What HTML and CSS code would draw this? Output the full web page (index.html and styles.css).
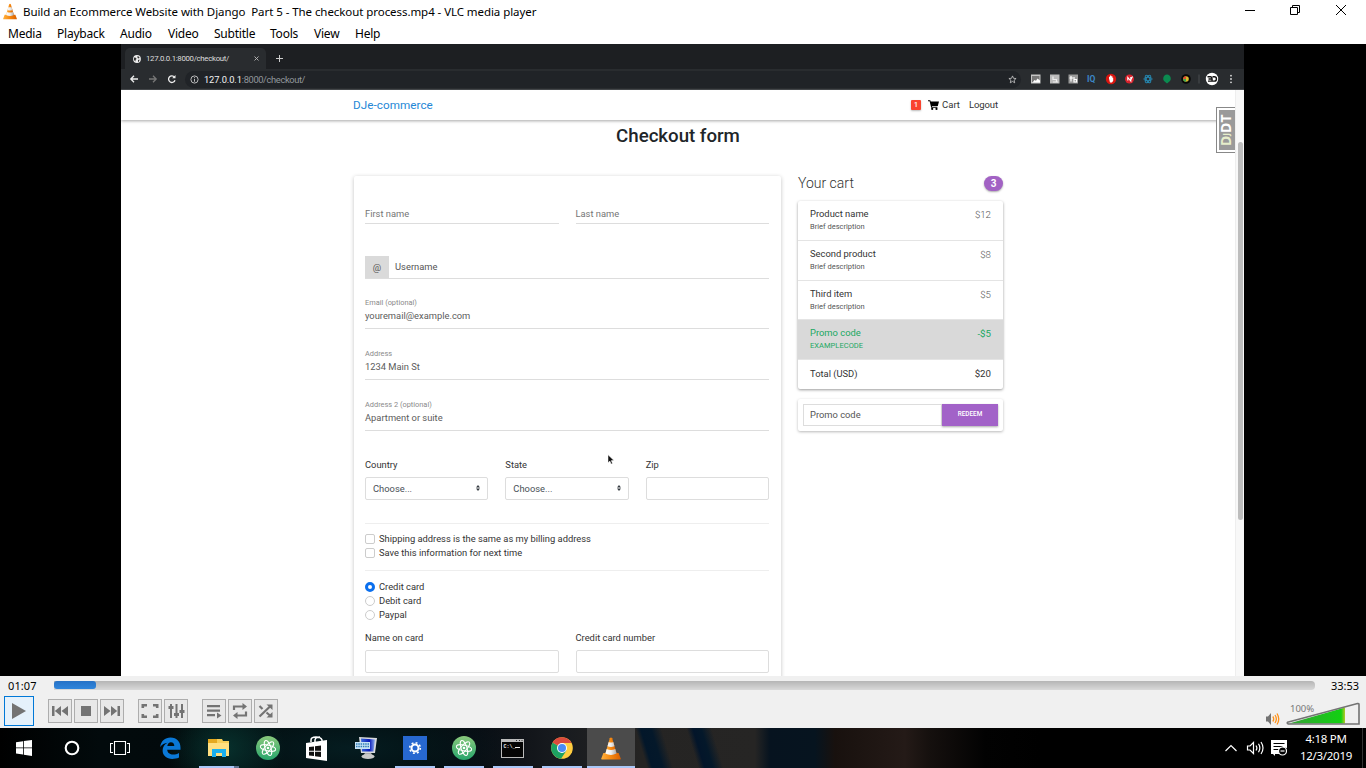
FILE: index.html
```html
<!DOCTYPE html>
<html lang="en">
<head>
<meta charset="utf-8">
<title>VLC media player</title>
<link rel="stylesheet" href="styles.css">
</head>
<body>
<svg class="defs" width="0" height="0">
  <defs>
    <linearGradient id="orange" x1="0" x2="1"><stop offset="0" stop-color="#ffb13d"/><stop offset=".5" stop-color="#f58710"/><stop offset="1" stop-color="#d95f00"/></linearGradient>
    <linearGradient id="white" x1="0" x2="1"><stop offset="0" stop-color="#fff"/><stop offset=".5" stop-color="#eee"/><stop offset="1" stop-color="#aaa"/></linearGradient>
    <linearGradient id="green" x1="0" x2="1"><stop offset="0" stop-color="#38a038"/><stop offset=".5" stop-color="#22bb22"/><stop offset=".93" stop-color="#12d012"/><stop offset="1" stop-color="#b4c828"/></linearGradient>
    <linearGradient id="atomg" x1="0" y1="0" x2="0" y2="1"><stop offset="0" stop-color="#8ac97c"/><stop offset="1" stop-color="#27a56c"/></linearGradient>
    <linearGradient id="screen" x1="0" x2="1"><stop offset="0" stop-color="#3a6ad8"/><stop offset=".6" stop-color="#0616b8"/><stop offset="1" stop-color="#8fb0f0"/></linearGradient>
    <symbol id="cone" viewBox="0 0 20 22">
      <path d="M2.400 15.500h15.200l2.200 5.700q.2.800-.8.800H1q-1 0-.8-.8z" fill="url(#orange)"/>
      <path d="M8.800.8q1.200-1.400 2.400 0L15.600 16q-1.500 2-5.600 2t-5.600-2z" fill="url(#orange)"/>
      <path d="M7.700 4.500q2.300 1.200 4.600 0l1.200 4.200q-3.500 1.600-7 0zM5.700 11.600q4.300 2 8.600 0l1.300 4.400q-5.600 2.800-11.200 0z" fill="url(#white)"/>
    </symbol>
    <symbol id="atom" viewBox="0 0 24 24">
      <circle cx="12" cy="12" r="12" fill="url(#atomg)"/>
      <g fill="none" stroke="#fff" stroke-width="1"><ellipse cx="12" cy="12" rx="7.800" ry="2.900" transform="rotate(12 12 12)"/><ellipse cx="12" cy="12" rx="7.800" ry="2.900" transform="rotate(72 12 12)"/><ellipse cx="12" cy="12" rx="7.800" ry="2.900" transform="rotate(132 12 12)"/></g>
      <circle cx="12" cy="12" r="1.300" fill="#fff"/>
    </symbol>
  </defs>
</svg>
<div class="app">
  <header class="titlebar">
    <svg class="tcone" width="14" height="17"><use href="#cone"/></svg>
    <span class="wtitle">Build an Ecommerce Website with Django&nbsp; Part 5 - The checkout process.mp4 - VLC media player</span>
    <svg class="winbtns" width="104" height="12" fill="none" stroke="#000">
      <path d="M0 6.500h10M45.500 3.500h7v7h-7zM47.500 3.500v-2h7v7h-2M91 1l10 10M101 1L91 11"/>
    </svg>
  </header>
  <nav class="menubar">
    <span class="m1">Media</span><span class="m2">Playback</span><span class="m3">Audio</span><span class="m4">Video</span><span class="m5">Subtitle</span><span class="m6">Tools</span><span class="m7">View</span><span class="m8">Help</span>
  </nav>

  <main class="video">
    <div class="frame">
      <div class="tabs">
        <div class="tab">
          <svg width="8" height="8" viewBox="0 0 8 8"><circle cx="4" cy="4" r="3.900" fill="#eee"/><path d="M1 2.500l2 .3.500 1.200-1 1v1.500L1 5zM4.500 1l2 1-.5 1.500-1.500-.5zM5 5l1.500-.5L6 6.500l-1 .5z" fill="#333"/></svg>
          <span class="tabname">127.0.0.1:8000/checkout/</span>
          <svg class="tabx" width="5" height="5" stroke="#bbb" stroke-width=".9"><path d="M.5.5l4 4M4.500.5l-4 4"/></svg>
        </div>
        <svg width="7" height="7" stroke="#ccc" stroke-width="1"><path d="M0 3.500h7M3.500 0v7"/></svg>
      </div>
      <div class="toolbar">
        <svg class="navs" width="48" height="10" fill="none" stroke="#eee" stroke-width="1.300">
          <path d="M9 5H2M5 1.700L1.800 5 5 8.300"/>
          <path d="M20 5h7M24 1.700L27.200 5 24 8.300" stroke="#777"/>
          <path d="M45.500 3.200a3.300 3.300 0 1 0 .5 3"/><path d="M46.500 1v3.300h-3.300z" fill="#eee" stroke="none"/>
        </svg>
        <div class="omni">
          <svg width="9" height="9" fill="none" stroke="#ccc" stroke-width=".9"><circle cx="4.500" cy="4.500" r="3.600"/><path d="M4.500 4v2.700M4.500 2.200v1"/></svg>
          <span class="url"><b>127.0.0.1</b>:8000/checkout/</span>
          <svg class="star" width="9" height="9" viewBox="0 0 9 9" fill="none" stroke="#ccc" stroke-width=".8"><path d="M4.500.9l1 2.400 2.600.2-2 1.700.6 2.600-2.200-1.400-2.200 1.400.6-2.600-2-1.700 2.600-.2z"/></svg>
        </div>
        <svg class="exts" width="206" height="14" viewBox="0 0 206 14">
          <rect y="2.500" width="9.500" height="9" fill="#c4c4c4"/><path d="M1 4h7.500v6H1z" fill="#777"/><path d="M1.500 10.500l2-2.500 1.500.8 1.500-2.300 2.500 2v2z" fill="#fff"/>
          <rect x="19" y="2.500" width="9.500" height="9" fill="#bbb"/><path d="M22 4.500v3h3.500v3M22 10h5" stroke="#eee" stroke-width="1.200" fill="none"/>
          <rect x="37.500" y="2.500" width="9.500" height="9" fill="#999"/><path d="M40 4v5.500M38.500 6h3.500M43 5v5h2.500v-2.500H43" stroke="#fff" stroke-width="1.200" fill="none"/>
          <text x="56" y="10.400" class="iq">IQ</text>
          <circle cx="80" cy="7" r="5.200" fill="#d9150f"/><path d="M78 6.500V4.800h1V3.500h1.200v.7h1.200v1.500h.8v3L81 10.500h-2z" fill="#fff"/>
          <circle cx="98.500" cy="7" r="4.500" fill="#d8222c"/><path d="M96.800 8.500V5.500l3 3.500V5M99.500 8.500l2-4" stroke="#fff" stroke-width="1.100" fill="none"/>
          <g fill="none" stroke="#2685ad"><ellipse cx="117" cy="7" rx="4.200" ry="1.800"/><ellipse cx="117" cy="7" rx="4.200" ry="1.800" transform="rotate(60 117 7)"/><ellipse cx="117" cy="7" rx="4.200" ry="1.800" transform="rotate(120 117 7)"/></g>
          <path d="M136 2.600a4 4 0 0 1 1.500 7.600l-1.500 1.300-1.500-1.300A4 4 0 0 1 136 2.600z" fill="#0b8a50"/>
          <circle cx="155" cy="7" r="4.800" fill="#080808"/><circle cx="155" cy="7" r="2.800" fill="#d9b92d"/><path d="M155 7V4.200a2.800 2.800 0 0 0-2.700 2.800z" fill="#e34b35"/><path d="M155 7h-2.700a2.800 2.800 0 0 0 2.700 2.800z" fill="#3ca755"/>
          <path d="M168 2.500v9" stroke="#4a4d50"/>
          <circle cx="181" cy="7" r="6.200" fill="#fff"/><path d="M176.500 4.800h3q2 0 1.500 4.300h-4M177.500 7h3M181.500 4.800h1.800a2.100 2.100 0 0 1 0 4.300H181" stroke="#111" stroke-width="1.400" fill="none"/>
          <g fill="#ddd"><circle cx="200" cy="3.700" r=".9"/><circle cx="200" cy="7" r=".9"/><circle cx="200" cy="10.300" r=".9"/></g>
        </svg>
      </div>
      <div class="page">
        <div class="navbar">
          <span class="brand">DJe-commerce</span>
          <div class="links"><span class="one">1</span>
            <svg width="11" height="10" viewBox="0 0 11 10"><path d="M0 .2h2.300l.4 1.200H11L9.800 6H3.900l.2.800h5.300v1H3.200L1.600 1.300H0z"/><circle cx="4.200" cy="8.900" r="1.100"/><circle cx="8.500" cy="8.900" r="1.100"/></svg>
            <span class="cartl">Cart</span><span class="logout">Logout</span></div>
        </div>
        <h2>Checkout form</h2>
        <div class="cols">
          <form class="card">
            <div class="row two"><div class="line first">First name</div><div class="line first">Last name</div></div>
            <div class="user"><span class="at">@</span><span class="uname">Username</span></div>
            <div class="field email"><small>Email (optional)</small><span class="e1">youremail@example.com</span></div>
            <div class="field"><small>Address</small><span>1234 Main St</span></div>
            <div class="field"><small>Address 2 (optional)</small><span>Apartment or suite</span></div>
            <div class="row three">
              <div><label>Country</label><div class="box">Choose...<svg width="4" height="6"><path d="M0 2.400L2 0l2 2.400zM0 3.600L2 6l2-2.400z" fill="#343a40"/></svg></div></div>
              <div><label>State</label><div class="box">Choose...<svg width="4" height="6"><path d="M0 2.400L2 0l2 2.400zM0 3.600L2 6l2-2.400z" fill="#343a40"/></svg></div></div>
              <div><label>Zip</label><div class="box"></div></div>
            </div>
            <div class="checks">
              <div class="opt"><i></i>Shipping address is the same as my billing address</div>
              <div class="opt"><i></i>Save this information for next time</div>
            </div>
            <div class="radios">
              <div class="opt"><i class="on"></i>Credit card</div>
              <div class="opt"><i></i>Debit card</div>
              <div class="opt"><i></i>Paypal</div>
            </div>
            <div class="row two pay">
              <div><label>Name on card</label><div class="box"></div></div>
              <div><label>Credit card number</label><div class="box"></div></div>
            </div>
          </form>
          <aside>
            <div class="carthead"><span>Your cart</span><b>3</b></div>
            <div class="list">
              <div class="item"><div>Product name<small>Brief description</small></div><span>$12</span></div>
              <div class="item"><div>Second product<small>Brief description</small></div><span>$8</span></div>
              <div class="item"><div>Third item<small>Brief description</small></div><span>$5</span></div>
              <div class="item promo"><div>Promo code<small>EXAMPLECODE</small></div><span>-$5</span></div>
              <div class="item total"><div>Total (USD)</div><span>$20</span></div>
            </div>
            <div class="redeem"><span>Promo code</span><b>REDEEM</b></div>
          </aside>
        </div>
        <div class="scroll"></div>
        <div class="djdt"><div><span>D<em>J</em></span>DT</div></div>
        <svg class="pointer" width="8" height="11" viewBox="0 0 8 11"><path d="M1 .8v8l1.900-1.700 1.200 3 1.400-.6L4.300 6.600H7z" fill="#111" stroke="#fff" stroke-width=".5"/></svg>
      </div>
    </div>
  </main>

  <section class="controls">
    <div class="seek"><span class="t1">01:07</span><div class="track"><div class="done"></div></div><span class="t2">33:53</span></div>
    <div class="buttons">
      <div class="play"><svg width="14" height="18"><path d="M0 1l14 8L0 17z"/></svg></div>
      <div class="grp g1">
        <div class="btn"><svg width="16" height="12"><path d="M0 1h2.500v10H0zM9 1v10L2.800 6zM16 1v10L9.500 6z"/></svg></div>
        <div class="btn"><svg width="10" height="10"><path d="M0 0h10v10H0z"/></svg></div>
        <div class="btn"><svg width="16" height="12"><path d="M13.500 1H16v10h-2.500zM7 1v10l6.200-5zM0 1v10l6.500-5z"/></svg></div>
      </div>
      <div class="grp g2">
        <div class="btn"><svg width="18" height="16" fill="none" stroke="#737373" stroke-width="2.600"><path d="M1.800 5V2.300H6M12 2.300h4.200V5M1.800 11v2.700H6M12 13.700h4.200V11" fill="none"/></svg></div>
        <div class="btn"><svg width="17" height="16"><path d="M2 1h2v14H2zM7.500 1h2v14h-2zM13 1h2v14h-2zM.5 3h5v3h-5zM6 10h5v3H6zM11.500 7h5v3h-5z"/></svg></div>
      </div>
      <div class="grp g3">
        <div class="btn"><svg width="16" height="16"><path d="M1 2h13v2.200H1zM1 6.500h13v2.200H1zM1 11h8v2.200H1zM11 9.500l4.500 3-4.500 3z"/></svg></div>
        <div class="btn"><svg width="16" height="16" fill="none" stroke="#737373" stroke-width="2.200"><path d="M2 7V3.500h9M14 8.500v4H5" fill="none"/><path d="M10.500 0l4.500 3.500L10.500 7zM5.500 9L1 12.500 5.500 16z" stroke="none"/></svg></div>
        <div class="btn"><svg width="16" height="16" stroke="#737373" stroke-width="2.200"><path d="M1.500 13.500L12 3.500M1.500 3l3 3M8.500 9.500l3.500 3" fill="none"/><path d="M8.500 1.500h6v5.500zM14.500 9v5.500h-6z" stroke="none"/></svg></div>
      </div>
      <div class="volume">
        <svg class="spk" width="15" height="14" viewBox="0 0 15 14"><path d="M1 4.500h2l3-3.500v12L3 9.500H1z" fill="#737373"/><path d="M7.800 4.500q1.800 2.500 0 5M10 3q2.700 4 0 8M12 1.500q3.500 5.500 0 11" stroke="#ff9119" stroke-width="1.300" fill="none"/></svg>
        <div class="wedge"><span>100%</span><svg width="76" height="24"><path d="M3 21.500L59 5.500v16z" fill="url(#green)"/><path d="M1.500 20.200L71.500 1.600q1.500-.2 1.500 1V22H2.500q-2-.8-1-1.800z" fill="none" stroke="#737373" stroke-width="1.600"/></svg></div>
      </div>
    </div>
  </section>

  <footer class="taskbar">
    <div class="task start"><svg width="16" height="16" fill="#fff"><path d="M0 2.300L7 1.200v6.300H0zM7.800 1.100L16 0v7.500H7.800zM0 8.300h7v6.300l-7-1zM7.800 8.300H16V16l-8.200-1.200z"/></svg></div>
    <div class="task"><svg width="16" height="16"><circle cx="8" cy="8" r="6.300" fill="none" stroke="#fff" stroke-width="2.100"/></svg></div>
    <div class="task tv"><svg width="20" height="15" fill="none" stroke="#fff" stroke-width="1.100"><path d="M4.500.5h11v13h-11zM3 2.500H.5v9H3M17 2.500h2.500v9H17"/></svg></div>
    <div class="task edge"><svg width="21" height="22" viewBox="0 0 21 22"><path d="M.2 10C1 4 5 .5 10.500.5 17 .5 20.500 5 20.500 10.500v2.300H7.200c.2 3.200 2.800 4.700 6 4.700 2.200 0 4-.5 5.800-1.500v4.500c-2 1-4.500 1.400-6.800 1.400C6.500 21.900 2.600 18.500 2.600 13.500c0-3.500 2-6.300 5-7.700C4.500 6 2 7.500.2 10zM7.300 9h7c0-2.200-1.200-3.700-3.400-3.700C9 5.300 7.700 6.700 7.300 9z" fill="#0a78d7"/></svg></div>
    <div class="task run part"><svg width="23" height="20"><path d="M1 1h9v3h12v14H1z" fill="#e5a920"/><path d="M1 5h21v13H1z" fill="#ffdf80"/><path d="M10 1h5l1 2h6v2H10z" fill="#f7ce58"/><path d="M5 11h14v8h-4v-4H9v4H5z" fill="#1ab0ee"/></svg></div>
    <div class="task"><svg width="24" height="24"><use href="#atom"/></svg></div>
    <div class="task"><svg width="21" height="25"><path d="M0 7l21-3v21L0 22z" fill="#fff"/><path d="M5 6V4q0-3 5-3t6 3v1M9 6V4q.5-3 5-3" fill="none" stroke="#fff" stroke-width="1.500"/><path d="M3 11l5-.6v4.300H3zM9 10.200l6-.7v5.200H9zM3 15.700h5V20l-5-.5zM9 15.700h6v5.200l-6-.7z" fill="#111"/></svg></div>
    <div class="task"><svg width="24" height="24"><path d="M5 1l18 1-2 15H7z" fill="#d8dadd"/><path d="M7 2.500l14 1-1.500 12H8z" fill="url(#screen)"/><path d="M11 17h6l2 3H9z" fill="#aaa"/><ellipse cx="14" cy="20.500" rx="6.500" ry="2.500" fill="#c9c9c9"/><path d="M1 6h15v7H1z" fill="#c7e2f5"/><path d="M2 8h13M2 10.500h13" stroke="#307eb5" stroke-width="1.500" stroke-dasharray="1.500 .8"/></svg></div>
    <div class="task run"><svg width="24" height="24"><path d="M0 0h24v24H0z" fill="#2768d0"/><circle cx="12" cy="12" r="3.500" fill="none" stroke="#fff" stroke-width="2"/><circle cx="12" cy="12" r="5.300" fill="none" stroke="#fff" stroke-width="1.600" stroke-dasharray="1.900 2.260"/></svg></div>
    <div class="task run"><svg width="24" height="24"><use href="#atom"/></svg></div>
    <div class="task run"><svg width="23" height="19"><path d="M0 0h23v19H0z" fill="#bbb"/><path d="M1 3h21v15H1z" fill="#050505"/><path d="M15 1.500h1M18 1.500h1M20.500 1.500h1" stroke="#333"/><text x="2.500" y="9" class="cmd">C:\_</text><path d="M14 8.500h5" stroke="#eee"/></svg></div>
    <div class="task run"><svg width="22" height="22" viewBox="0 0 22 22"><circle cx="11" cy="11" r="10.800" fill="#ffcd40"/><path d="M11 11L1.600 5.600A10.800 10.800 0 0 0 10 21.750L15.500 13.500z" fill="#1da261"/><path d="M11 11L1.600 5.600A10.800 10.800 0 0 1 20.500 6H11z" fill="#dc4a3d"/><circle cx="11" cy="11" r="5" fill="#fff"/><circle cx="11" cy="11" r="4" fill="#4c8bf5"/></svg></div>
    <div class="task run active"><svg width="20" height="23"><use href="#cone"/></svg></div>
    <div class="tray">
      <svg width="62" height="16" fill="none" stroke="#fff" stroke-width="1.200">
        <path d="M.5 11L6 5.500 11.500 11"/>
        <path d="M22.500 6H25l3.500-3.500v11L25 10h-2.500zM31 5.500q1.800 2.500 0 5M33.500 3.800q2.700 4.200 0 8.400M36 2q4 6 0 12"/>
        <path d="M46 0h16v8a4.500 4.500 0 0 0-5.500 6H50v2l-2-2h-2z" fill="#fff" stroke="none"/><path d="M48.500 3.500h11M48.500 6.500h9M48.500 9.500h6" stroke="#000"/><circle cx="57.500" cy="11" r="4" fill="#000"/><path d="M55.500 11h4"/>
      </svg>
      <div class="clock"><span>4:18 PM</span><span class="date">12/3/2019</span></div>
    </div>
  </footer>
</div>
</body>
</html>
```
FILE: styles.css
```css
*{box-sizing:border-box}
body{margin:0;background:#000;overflow:hidden}
svg{display:block;flex:none}
.defs{position:absolute}
.app{width:1366px;height:768px;display:flex;flex-direction:column;font-family:"Noto Sans","Open Sans",sans-serif;font-size:12px;color:#000;overflow:hidden}
.titlebar{height:24px;background:#fff;display:flex;align-items:center;padding-left:3px;white-space:nowrap}
.tcone{margin-top:-2px}
.wtitle{margin:-2px 0 0 6px;font-size:11.500px;letter-spacing:-.065px}
.winbtns{margin:-4px 17px 0 auto}
.menubar{height:20px;background:#fff;display:flex;padding-left:8px;line-height:20px;white-space:nowrap}
.menubar span{letter-spacing:-.22px}
.m1{width:49px}.m2{width:63px}.m3{width:48px}.m4{width:46px}.m5{width:56px}.m6{width:44px}.m7{width:41px}
.video{height:632px;background:#000;padding:0 122px 0 121px}
.frame{width:1123px;height:632px;display:flex;flex-direction:column;font-family:Roboto,sans-serif;overflow:hidden}
.tabs{height:25px;background:#1d1f22;display:flex;align-items:center;padding:4px 0 0 4px}
.tab{width:141px;height:21px;background:#292c2f;border-radius:5px 5px 0 0;display:flex;align-items:center;padding:0 7px 0 8px;margin-right:10px;color:#ddd}
.tabname{font-size:7.800px;margin-left:5px;letter-spacing:-.3px}
.tabx{margin-left:auto}
.toolbar{height:21px;background:#292c2f;border-bottom:1px solid #44474a;display:flex;align-items:center;padding-left:8px}
.omni{width:836px;height:17px;background:#202327;border-radius:9px;margin-left:8px;padding:0 4px 0 5px;display:flex;align-items:center;flex:none}
.url{font-size:9px;color:#91979c;margin-left:5px;letter-spacing:.03px}
.url b{font-weight:400;color:#f2f2f2;letter-spacing:-.1px}
.url{letter-spacing:-.37px;font-size:9.300px}
.star{margin-left:auto}
.exts{margin-left:10px}
.iq{font:bold 8.500px Roboto;fill:#3c87c7}
.page{position:relative;flex:1;background:#fff;overflow:hidden;font-size:9.360px;color:#333}
.navbar{height:30px;display:flex;align-items:center;justify-content:space-between;padding:0 246px 0 232px;box-shadow:0 1px 3px rgba(0,0,0,.35);background:#fff}
.brand{color:#2487d6;font-size:11.700px;letter-spacing:.05px}
.links{display:flex;align-items:center;font-size:9.500px;line-height:12px}
.one{width:10px;height:10px;background:#f9442f;color:#fff;border-radius:1px;font-size:7px;line-height:10px;text-align:center;font-weight:500;margin-right:7px;box-shadow:0 1px 2px #bbb}
.cartl{margin:0 9px 0 3px}
.logout{letter-spacing:-.1px}
h2{margin:3px 9px 0 0;height:26px;line-height:26px;font-size:18.700px;font-weight:500;text-align:center;color:#212529;letter-spacing:-.02px}
.cols{display:flex;padding-left:233px;margin-top:26px;align-items:flex-start}
.card{width:427px;height:520px;margin-top:1px;background:#fff;border-radius:2px;box-shadow:0 1px 4px rgba(0,0,0,.24);padding:0 12px 0 11px;flex:none}
.row{display:grid;column-gap:17px}
.two{grid-template-columns:1fr 1fr}
.three{grid-template-columns:1fr 1fr 1fr}
.line{height:48px;border-bottom:1px solid #ddd;padding-top:28px;line-height:19px;color:#757575}
.user{height:23px;margin-top:32px;border-bottom:1px solid #ddd;display:flex;line-height:21px;color:#555}
.at{width:24px;height:22px;background:#dadada;text-align:center;line-height:24px;margin-right:6px;color:#555}
.uname{letter-spacing:.02px}
.field{height:51px;border-bottom:1px solid #ddd;padding-top:18px;color:#5c5c5c}
.email{height:50px;padding-top:17px}
.field small{display:block;font-size:7.400px;line-height:13px;margin-bottom:-1px;color:#8a8a8a}
.field span{display:block;line-height:16px}
.three{padding-top:27px}
label{display:block;line-height:14px;color:#333}
.box{margin-top:5px;height:23px;border:1px solid #ddd;border-radius:2px;padding:0 7px 1px;display:flex;align-items:center;justify-content:space-between;color:#495057}
.checks{margin-top:23px;border-top:1px solid #eee;border-bottom:1px solid #eee;padding:8px 0 10px}
.opt{height:14px;line-height:14px;display:flex;align-items:center}
.opt i{width:10px;height:10px;border:1px solid #ccc;border-radius:2px;margin-right:4px}
.radios{padding:9px 0}
.radios i{border-radius:50%}
.radios i.on{border:3px solid #0b6fee}
aside{width:205px;margin-left:17px}
.carthead{height:26px;display:flex;justify-content:space-between;align-items:center;font-size:14px;font-weight:300;color:#333;padding-bottom:10px}
.carthead b{width:19px;height:15px;border-radius:8px;background:#a262c4;color:#fff;font-size:10px;line-height:15px;text-align:center;font-weight:700;box-shadow:0 1px 2px #aaa}
.list{box-shadow:0 1px 3px rgba(0,0,0,.4);border-radius:2px;background:#fff}
.item{height:39.800px;display:flex;justify-content:space-between;padding:5px 12px 0;border-bottom:1px solid #e4e4e4;line-height:16px;font-size:9.400px}
.item small{display:block;font-size:7.500px;line-height:10px;color:#555}
.item span{color:#555;padding-top:1px;font-weight:300;font-size:9.700px}
.promo{background:#d9d9d9;color:#19a862}
.promo small,.promo span{color:#19a862;font-weight:400}
.promo small{letter-spacing:.04px}
.total{height:28.800px;border:0;padding-top:6px}
.total span{color:#333;padding:0;font-weight:400}
.redeem{height:32px;margin-top:10px;box-shadow:0 1px 3px rgba(0,0,0,.28);border-radius:2px;padding:5px;display:flex}
.redeem span{flex:1;border:1px solid #ddd;line-height:20px;padding-left:6px;color:#555}
.redeem b{width:56px;background:#a262c8;color:#fff;font-size:6.400px;font-weight:500;line-height:21px;text-align:center;box-shadow:0 1px 2px #aaa}
.scroll{position:absolute;right:0;top:0;width:9px;height:586px;background:#f8f8f8;border-left:1px solid #eee}
.scroll::after{content:"";position:absolute;left:2px;top:52px;width:5px;height:378px;border-radius:3px;background:#bdbdbd}
.djdt{position:absolute;right:9px;top:17px;width:19px;height:46px;border:1px solid #888;border-right:0;background:#fff;padding:2px 0 2px 2px}
.djdt div{width:16px;height:40px;background:#9a9a9a;color:#fff;writing-mode:vertical-rl;transform:rotate(180deg);font:bold 14px/14px "Open Sans",sans-serif;text-align:center}
.djdt span{color:#e6eecb}
.djdt em{font-style:normal;font-size:8px}
.pointer{position:absolute;left:486px;top:364px}
.controls{height:52px;background:#f0f0f0}
.seek{height:18px;display:flex;align-items:center;padding:2px 7px 0 8px;font-size:11px;line-height:16px}
.t1{width:46px;letter-spacing:.1px}
.track{width:1261px;height:9px;background:linear-gradient(#b5b5b5,#d9d9d9);border-radius:0 4px 4px 0;margin-top:-2px}
.done{width:42px;height:8px;background:linear-gradient(#2672c6,#3086dc);border-radius:3px}
.t2{margin-left:auto}
.buttons{display:flex;padding:2px 0 0 4px;align-items:flex-start;height:34px}
.buttons svg{fill:#737373}
.play{width:30px;height:30px;border:1px solid #0078d7;background:#e5f1fb;display:flex;align-items:center;justify-content:center}
.grp{display:flex;gap:2px;margin:3px 0 0 14px}
.btn{width:24px;height:24px;border:1px solid #adadad;background:#e8e8e8;display:flex;align-items:center;justify-content:center}
.volume{margin-left:auto;display:flex;padding-right:4px}
.spk{margin:16px 6px 0 0}
.wedge{position:relative;padding-top:6px;width:76px}
.wedge span{position:absolute;left:4px;top:7px;font-size:9.500px;line-height:12px;color:#777}
.taskbar{height:40px;display:flex;background:radial-gradient(ellipse 60px 50px at 225px 20px,#07302c,transparent),radial-gradient(ellipse 180px 50px at 350px 20px,#051c20,transparent),linear-gradient(73deg,transparent 619px,#03172a 624px,#04182a 634px,transparent 644px,transparent 668px,#03152a 674px,#04182a 682px,transparent 692px),linear-gradient(90deg,#000 0,#020a0c 100px,#02090b 420px,#090c12 480px,#181b1f 560px,#252423 640px,#262524 755px,#06131f 770px,#06141f 815px,#18110e 835px,#241a17 905px,#15100e 930px,#020202 985px,#000 1040px)}
.task{width:49px;height:40px;display:flex;align-items:center;justify-content:center;flex:none}
.start{width:47px}
.tv{padding-right:2px}
.edge{padding-left:2px}
.run{background:linear-gradient(#a9c7f8,#a9c7f8) 50% 100%/40px 2px no-repeat}
.part{background:linear-gradient(90deg,#a9c7f8 35px,#617593 35px) 50% 100%/40px 2px no-repeat}
.active{width:48px;margin-left:1px;background:linear-gradient(#a9c7f8,#a9c7f8) 0 100%/48px 2px no-repeat,#4b4b4b}
.cmd{font:bold 5px "Liberation Mono";fill:#eee}
.tray{margin-left:auto;display:flex;align-items:center;color:#fff;border-right:1px solid #333;margin-right:3px;padding-right:9px}
.clock{width:54px;margin:-2px 0 0 12px;display:flex;flex-direction:column;align-items:center;line-height:17px;font-size:11.500px;letter-spacing:-.3px;white-space:nowrap}
```
